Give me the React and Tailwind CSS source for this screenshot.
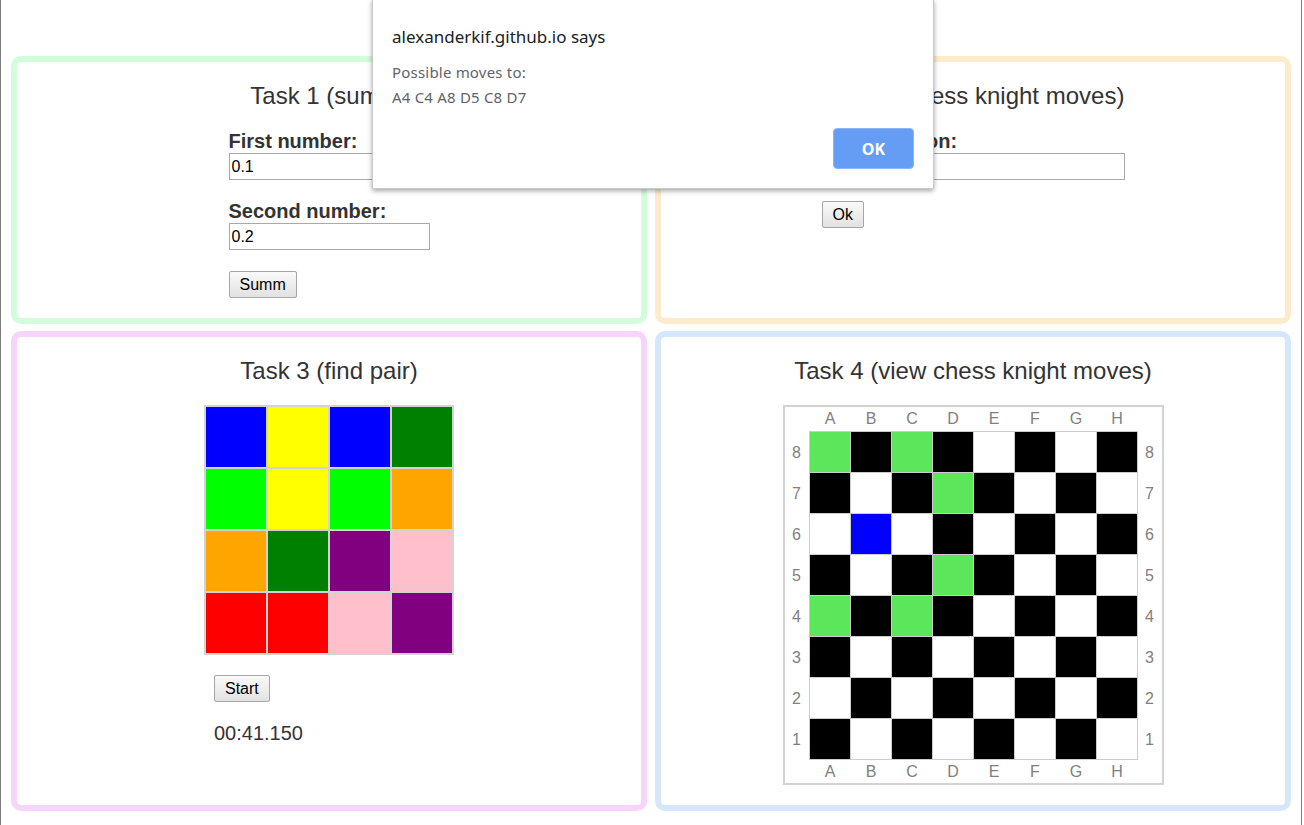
import React from "react";

const memColors = [
  "#0000ff", "#ffff00", "#0000ff", "#008000",
  "#00ff00", "#ffff00", "#00ff00", "#ffa500",
  "#ffa500", "#008000", "#800080", "#ffc0cb",
  "#ff0000", "#ff0000", "#ffc0cb", "#800080",
];

const letters = ["A", "B", "C", "D", "E", "F", "G", "H"];
const ranks = [8, 7, 6, 5, 4, 3, 2, 1];
const green = new Set(["A4", "C4", "A8", "D5", "C8", "D7"]);

function cellColor(col, rank) {
  const id = letters[col] + rank;
  if (id === "B6") return "bg-[#0000ff]";
  if (green.has(id)) return "bg-[#5ce65c]";
  return (rank + col) % 2 === 1 ? "bg-black" : "bg-white";
}

function Btn({ children, className = "" }) {
  return (
    <button
      className={
        "h-[27px] px-[10px] border border-[#a6a6a6] rounded-[2px] bg-gradient-to-b from-[#fafafa] to-[#e2e2e2] text-[16px] leading-[19px] text-black " +
        className
      }
    >
      {children}
    </button>
  );
}

function Title({ children }) {
  return <h2 className="text-[24px] leading-[30px] text-[#333]">{children}</h2>;
}

export default function App() {
  return (
    <div
      className="relative w-[1304px] h-[825px] overflow-hidden bg-white"
      style={{ fontFamily: '"Liberation Sans", Arial, sans-serif' }}
    >
      <div className="w-[1302px] h-[825px] border-l border-r border-[#7d7d7d] pl-[10px] pt-[56px]">
        <div className="grid grid-cols-[636px_636px] grid-rows-[268px_480px] gap-x-[8px] gap-y-[7px]">
          {/* Task 1 */}
          <div className="rounded-[10px] border-[6px] border-[#d3fcdb] flex flex-col items-center pt-[19px]">
            <Title>Task 1 (summ)</Title>
            <div className="mt-[19px] w-[201px] flex flex-col items-start">
              <label className="font-bold text-[20px] leading-[23px] text-[#333]">First number:</label>
              <input
                readOnly
                value="0.1"
                className="w-[201px] h-[27px] border border-[#a9a9a9] px-[2px] text-[16px] text-black outline-none"
              />
              <label className="mt-[20px] font-bold text-[20px] leading-[23px] text-[#333]">Second number:</label>
              <input
                readOnly
                value="0.2"
                className="w-[201px] h-[27px] border border-[#a9a9a9] px-[2px] text-[16px] text-black outline-none"
              />
              <Btn className="mt-[21px]">Summ</Btn>
            </div>
          </div>

          {/* Task 2 */}
          <div className="rounded-[10px] border-[6px] border-[#fdebcb] flex flex-col items-center pt-[19px]">
            <Title>Task 2 (chess knight moves)</Title>
            <div className="mt-[19px] w-[303px] flex flex-col items-start">
              <label className="font-bold text-[20px] leading-[23px] text-[#333]">Start position:</label>
              <input
                readOnly
                value=""
                className="w-[303px] h-[27px] border border-[#a9a9a9] px-[2px] text-[16px] text-black outline-none"
              />
              <Btn className="mt-[21px]">Ok</Btn>
            </div>
          </div>

          {/* Task 3 */}
          <div className="rounded-[10px] border-[6px] border-[#f7d4fb] flex flex-col items-center pt-[19px]">
            <Title>Task 3 (find pair)</Title>
            <div className="mt-[19px] w-[250px] flex flex-col items-start">
              <div className="grid grid-cols-[60px_60px_60px_60px] gap-[2px] p-[2px] bg-[#d3d3d3]">
                {memColors.map((c, i) => (
                  <div key={i} className="h-[60px]" style={{ backgroundColor: c }} />
                ))}
              </div>
              <Btn className="mt-[20px] ml-[10px]">Start</Btn>
              <div className="mt-[20px] ml-[10px] text-[20px] leading-[23px] text-[#333]">00:41.150</div>
            </div>
          </div>

          {/* Task 4 */}
          <div className="rounded-[10px] border-[6px] border-[#d4e7fc] flex flex-col items-center pt-[19px]">
            <Title>Task 4 (view chess knight moves)</Title>
            <div className="mt-[19px] border-2 border-[#d3d3d3] text-[16px] text-[#808080]">
              <div className="flex h-[24px] items-center pl-[25px]">
                {letters.map((l) => (
                  <div key={l} className="w-[41px] text-center leading-[18px]">{l}</div>
                ))}
              </div>
              <div className="flex">
                <div className="w-[24px] flex flex-col pt-[1px]">
                  {ranks.map((r) => (
                    <div key={r} className="h-[41px] flex items-center justify-center">{r}</div>
                  ))}
                </div>
                <div className="border-l border-t border-[#cccccc]">
                  {ranks.map((r) => (
                    <div key={r} className="flex">
                      {letters.map((l, c) => (
                        <div
                          key={l}
                          className={"w-[41px] h-[41px] border-r border-b border-[#cccccc] " + cellColor(c, r)}
                        />
                      ))}
                    </div>
                  ))}
                </div>
                <div className="w-[24px] flex flex-col pt-[1px]">
                  {ranks.map((r) => (
                    <div key={r} className="h-[41px] flex items-center justify-center">{r}</div>
                  ))}
                </div>
              </div>
              <div className="flex h-[23px] items-center pl-[25px]">
                {letters.map((l) => (
                  <div key={l} className="w-[41px] text-center leading-[18px]">{l}</div>
                ))}
              </div>
            </div>
          </div>
        </div>
      </div>

      {/* Alert dialog */}
      <div
        className="absolute left-[372px] top-[-1px] w-[562px] h-[190px] bg-white border border-[#c9c9c9] rounded-b-[2px] shadow-[0_2px_5px_rgba(0,0,0,0.35)] pl-[19px] pr-[19px]"
        style={{ fontFamily: '"Noto Sans", "Open Sans", sans-serif' }}
      >
        <div className="pt-[25px] text-[17px] leading-[24px] text-[#202124]">alexanderkif.github.io says</div>
        <div className="mt-[11px] text-[15px] leading-[25px] text-[#5f6368] tracking-[0.2px]">
          <div>Possible moves to:</div>
          <div>A4 C4 A8 D5 C8 D7</div>
        </div>
        <div className="flex justify-end mt-[18px]">
          <button className="w-[81px] h-[41px] rounded-[4px] bg-[#659cf4] border border-[#8db6f6] text-white text-[16px] font-bold">
            OK
          </button>
        </div>
      </div>
    </div>
  );
}
